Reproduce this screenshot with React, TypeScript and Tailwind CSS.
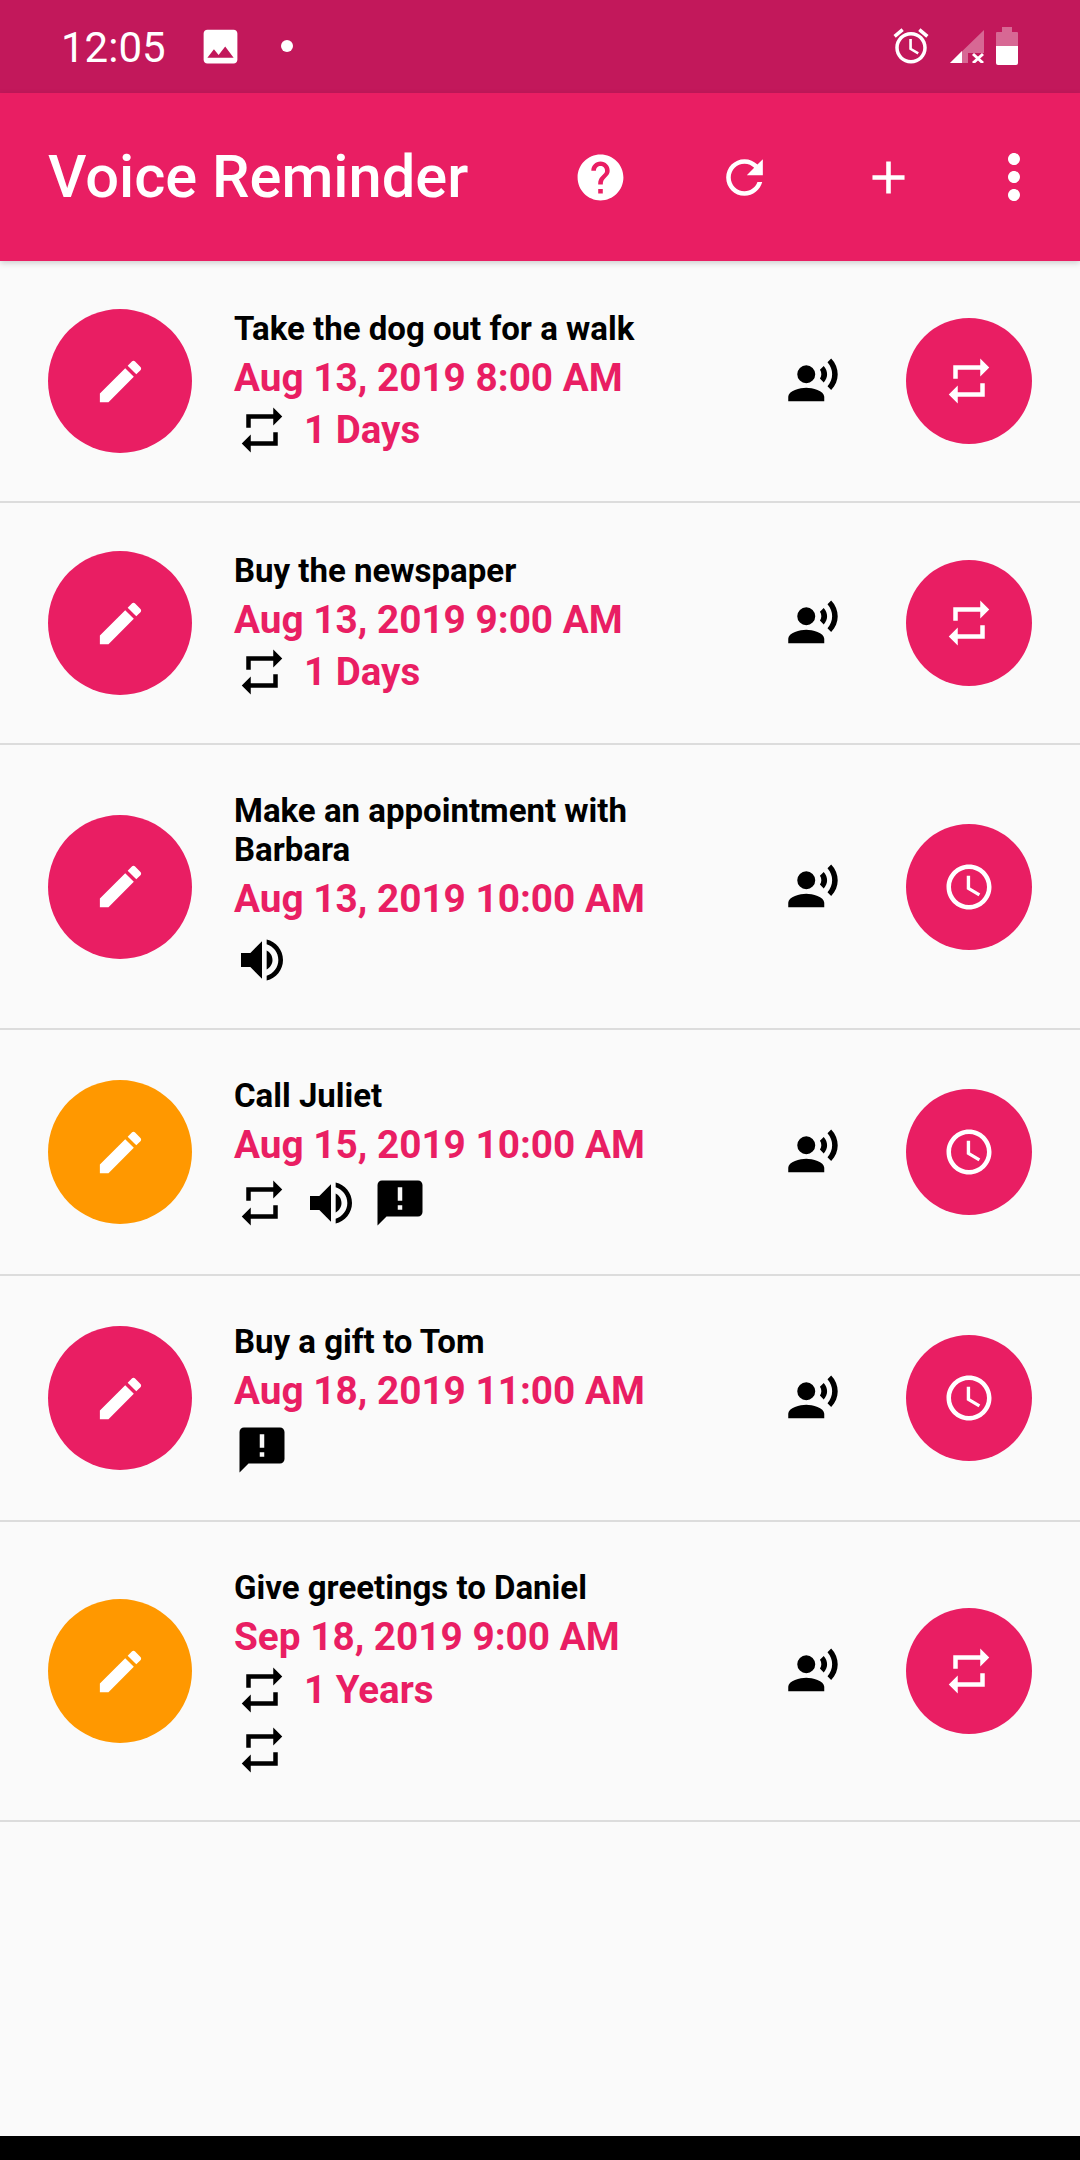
const icons = {
  repeat: "M7 7h10v3l4-4-4-4v3H5v6h2V7zm10 10H7v-3l-4 4 4 4v-3h12v-6h-2v4z",
  volume: "M3 9v6h4l5 5V4L7 9H3zm13.5 3c0-1.77-1.02-3.29-2.5-4.03v8.05c1.48-.73 2.5-2.25 2.5-4.02zM14 3.23v2.06c2.89.86 5 3.54 5 6.71s-2.11 5.85-5 6.71v2.06c4.01-.91 7-4.49 7-8.77s-2.99-7.86-7-8.77z",
  message: "M20 2H4c-1.1 0-1.99.9-1.99 2L2 22l4-4h14c1.1 0 2-.9 2-2V4c0-1.1-.9-2-2-2zm-7 9h-2V5h2v6zm0 4h-2v-2h2v2z",
  edit: "M3 17.25V21h3.75L17.81 9.94l-3.75-3.75L3 17.25zM20.71 7.04c.39-.39.39-1.02 0-1.41l-2.34-2.34c-.39-.39-1.02-.39-1.41 0l-1.83 1.83 3.75 3.75 1.83-1.83z",
  voice: "M9 5a4 4 0 1 0 0 8 4 4 0 0 0 0-8zM9 15c-2.67 0-8 1.34-8 4v2h16v-2c0-2.66-5.33-4-8-4zm7.76-9.64l-1.68 1.69c.84 1.18.84 2.71 0 3.89l1.68 1.69c2.02-2.02 2.02-5.07 0-7.27zM20.07 2l-1.63 1.63c2.77 3.02 2.77 7.56 0 10.74L20.07 16c3.9-3.89 3.91-9.95 0-14z",
  clock: "M11.99 2C6.47 2 2 6.48 2 12s4.47 10 9.99 10C17.52 22 22 17.52 22 12S17.52 2 11.99 2zM12 20c-4.42 0-8-3.58-8-8s3.58-8 8-8 8 3.58 8 8-3.58 8-8 8zm.5-13H11v6l5.25 3.15.75-1.23-4.5-2.67z",
  help: "M12 2C6.48 2 2 6.48 2 12s4.48 10 10 10 10-4.48 10-10S17.52 2 12 2zm1 17h-2v-2h2v2zm2.07-7.75l-.9.92C13.45 12.9 13 13.5 13 15h-2v-.5c0-1.1.45-2.1 1.17-2.83l1.24-1.26c.37-.36.59-.86.59-1.41 0-1.1-.9-2-2-2s-2 .9-2 2H8c0-2.21 1.79-4 4-4s4 1.79 4 4c0 .88-.36 1.68-.93 2.25z",
  refresh: "M17.65 6.35C16.2 4.9 14.21 4 12 4c-4.42 0-7.99 3.58-7.99 8s3.57 8 7.99 8c3.73 0 6.84-2.55 7.73-6h-2.08c-.82 2.33-3.04 4-5.65 4-3.31 0-6-2.69-6-6s2.69-6 6-6c1.66 0 3.14.69 4.22 1.78L13 11h7V4l-2.35 2.35z",
  add: "M19 13h-6v6h-2v-6H5v-2h6V5h2v6h6v2z",
  more: "M12 8c1.1 0 2-.9 2-2s-.9-2-2-2-2 .9-2 2 .9 2 2 2zm0 2c-1.1 0-2 .9-2 2s.9 2 2 2 2-.9 2-2-.9-2-2-2zm0 6c-1.1 0-2 .9-2 2s.9 2 2 2 2-.9 2-2-.9-2-2-2z",
  image: "M21 19V5c0-1.1-.9-2-2-2H5c-1.1 0-2 .9-2 2v14c0 1.1.9 2 2 2h14c1.1 0 2-.9 2-2zM8.5 13.5l2.5 3.01L14.5 12l4.5 6H5l3.5-4.5z",
  alarm: "M22 5.72l-4.6-3.86-1.29 1.53 4.6 3.86L22 5.72zM7.88 3.39L6.6 1.86 2 5.71l1.29 1.53 4.59-3.85zM12.5 8H11v6l4.75 2.85.75-1.23-4-2.37V8zM12 4c-4.97 0-9 4.03-9 9s4.02 9 9 9c4.97 0 9-4.03 9-9s-4.03-9-9-9zm0 16c-3.87 0-7-3.13-7-7s3.13-7 7-7 7 3.13 7 7-3.13 7-7 7z",
};

type IconName = keyof typeof icons;

const Icon = ({ name, className }: { name: IconName; className: string }) => (
  <svg viewBox="0 0 24 24" className={className} fill="currentColor">
    <path d={icons[name]} />
  </svg>
);

type Reminder = {
  title: string;
  date: string;
  height: string;
  top: string;
  gap: string;
  iconRows: { names: IconName[]; label?: string }[];
  left: string;
  action: IconName;
};

const reminders: Reminder[] = [
  { title: "Take the dog out for a walk", date: "Aug 13, 2019 8:00 AM", height: "h-[242px]", top: "pt-[48px]", gap: "mt-0", iconRows: [{ names: ["repeat"], label: "1 Days" }], left: "bg-[#e91e63]", action: "repeat" },
  { title: "Buy the newspaper", date: "Aug 13, 2019 9:00 AM", height: "h-[242px]", top: "pt-[48px]", gap: "mt-0", iconRows: [{ names: ["repeat"], label: "1 Days" }], left: "bg-[#e91e63]", action: "repeat" },
  { title: "Make an appointment with Barbara", date: "Aug 13, 2019 10:00 AM", height: "h-[285px]", top: "pt-[46px]", gap: "mt-[3px]", iconRows: [{ names: ["volume"] }], left: "bg-[#e91e63]", action: "clock" },
  { title: "Call Juliet", date: "Aug 15, 2019 10:00 AM", height: "h-[246px]", top: "pt-[46px]", gap: "mt-0", iconRows: [{ names: ["repeat", "volume", "message"] }], left: "bg-[#ff9800]", action: "clock" },
  { title: "Buy a gift to Tom", date: "Aug 18, 2019 11:00 AM", height: "h-[246px]", top: "pt-[46px]", gap: "mt-[1px]", iconRows: [{ names: ["message"] }], left: "bg-[#e91e63]", action: "clock" },
  { title: "Give greetings to Daniel", date: "Sep 18, 2019 9:00 AM", height: "h-[300px]", top: "pt-[46px]", gap: "mt-[1px]", iconRows: [{ names: ["repeat"], label: "1 Years" }, { names: ["repeat"] }], left: "bg-[#ff9800]", action: "repeat" },
];

const StatusBar = () => (
  <div className="h-[93px] bg-[#c2185b] flex items-center text-white relative">
    <span className="ml-[61px] text-[42px] leading-none w-[137px] mt-[2px]">12:05</span>
    <Icon name="image" className="w-[45px] h-[45px] -mt-[1px]" />
    <div className="ml-[38px] w-[12px] h-[12px] rounded-full bg-white -mt-[1px]" />
    <div className="flex-1" />
    <Icon name="alarm" className="w-[42px] h-[42px] -mt-[1px]" />
    <svg viewBox="0 0 34 34" className="ml-[18px] w-[34px] h-[34px] -mt-[1px]" fill="white">
      <path d="M34 1v23H18v10H0z" fillOpacity="0.35" />
      <path d="M0 34l12-12v12z" />
      <path d="M23 25l10 9M33 25l-10 9" stroke="white" strokeWidth="3" />
    </svg>
    <div className="ml-[12px] mr-[62px] w-[22px] h-[38px] -mt-[1px] flex flex-col items-center">
      <div className="w-[10px] h-[5px] bg-white/35" />
      <div className="w-[22px] h-[14px] bg-white/35 rounded-t-[1px]" />
      <div className="w-[22px] flex-1 bg-white rounded-b-[2px]" />
    </div>
  </div>
);

const AppBar = () => (
  <div className="h-[168px] bg-[#e91e63] flex items-center text-white shadow-[0_2px_6px_rgba(0,0,0,0.18)] relative">
    <h1 className="ml-[48px] text-[59.6px] font-medium leading-none w-[480px] shrink-0 whitespace-nowrap mt-[1px]">Voice Reminder</h1>
    {(["help", "refresh", "add"] as IconName[]).map((name) => (
      <div key={name} className="w-[144px] flex justify-center">
        <Icon name={name} className="w-[55px] h-[55px]" />
      </div>
    ))}
    <div className="w-[108px] flex justify-center">
      <Icon name="more" className="w-[72px] h-[72px]" />
    </div>
  </div>
);

const ReminderRow = ({ item }: { item: Reminder }) => (
  <div className={`${item.height} flex border-b-2 border-[#dcdcdc] pl-[48px] pr-[48px]`}>
    <div className={`${item.left} w-[144px] h-[144px] rounded-full self-center flex items-center justify-center text-white shrink-0`}>
      <Icon name="edit" className="w-[55px] h-[55px]" />
    </div>
    <div className={`ml-[42px] flex-1 ${item.top}`}>
      <div className="w-[440px] text-[33px] leading-[39px] font-bold text-black">{item.title}</div>
      <div className="mt-[5px] text-[38.75px] leading-[50px] font-bold text-[#e91e63] whitespace-nowrap">{item.date}</div>
      <div className={item.gap}>
        {item.iconRows.map((row, i) => (
          <div key={i} className={`flex items-center -ml-[7px] ${row.label ? "h-[54px]" : "h-[66px]"}`}>
            {row.names.map((name) => (
              <div key={name} className="w-[69px] flex justify-center">
                <Icon name={name} className={`${name === "volume" ? "w-[56px] h-[56px]" : "w-[54px] h-[54px]"} text-black shrink-0`} />
              </div>
            ))}
            {row.label && <span className="ml-[8px] text-[38.5px] font-bold text-[#e91e63]">{row.label}</span>}
          </div>
        ))}
      </div>
    </div>
    <Icon name="voice" className="w-[54px] h-[54px] self-center text-black shrink-0" />
    <div className="ml-[66px] w-[126px] h-[126px] rounded-full bg-[#e91e63] self-center flex items-center justify-center text-white shrink-0">
      <Icon name={item.action} className="w-[54px] h-[54px]" />
    </div>
  </div>
);

export default function App() {
  return (
    <div className="h-[2160px] bg-[#fafafa] flex flex-col font-['Roboto',sans-serif]">
      <StatusBar />
      <AppBar />
      <div className="flex-1">
        {reminders.map((item) => (
          <ReminderRow key={item.title} item={item} />
        ))}
      </div>
      <div className="h-[24px] bg-black" />
    </div>
  );
}
